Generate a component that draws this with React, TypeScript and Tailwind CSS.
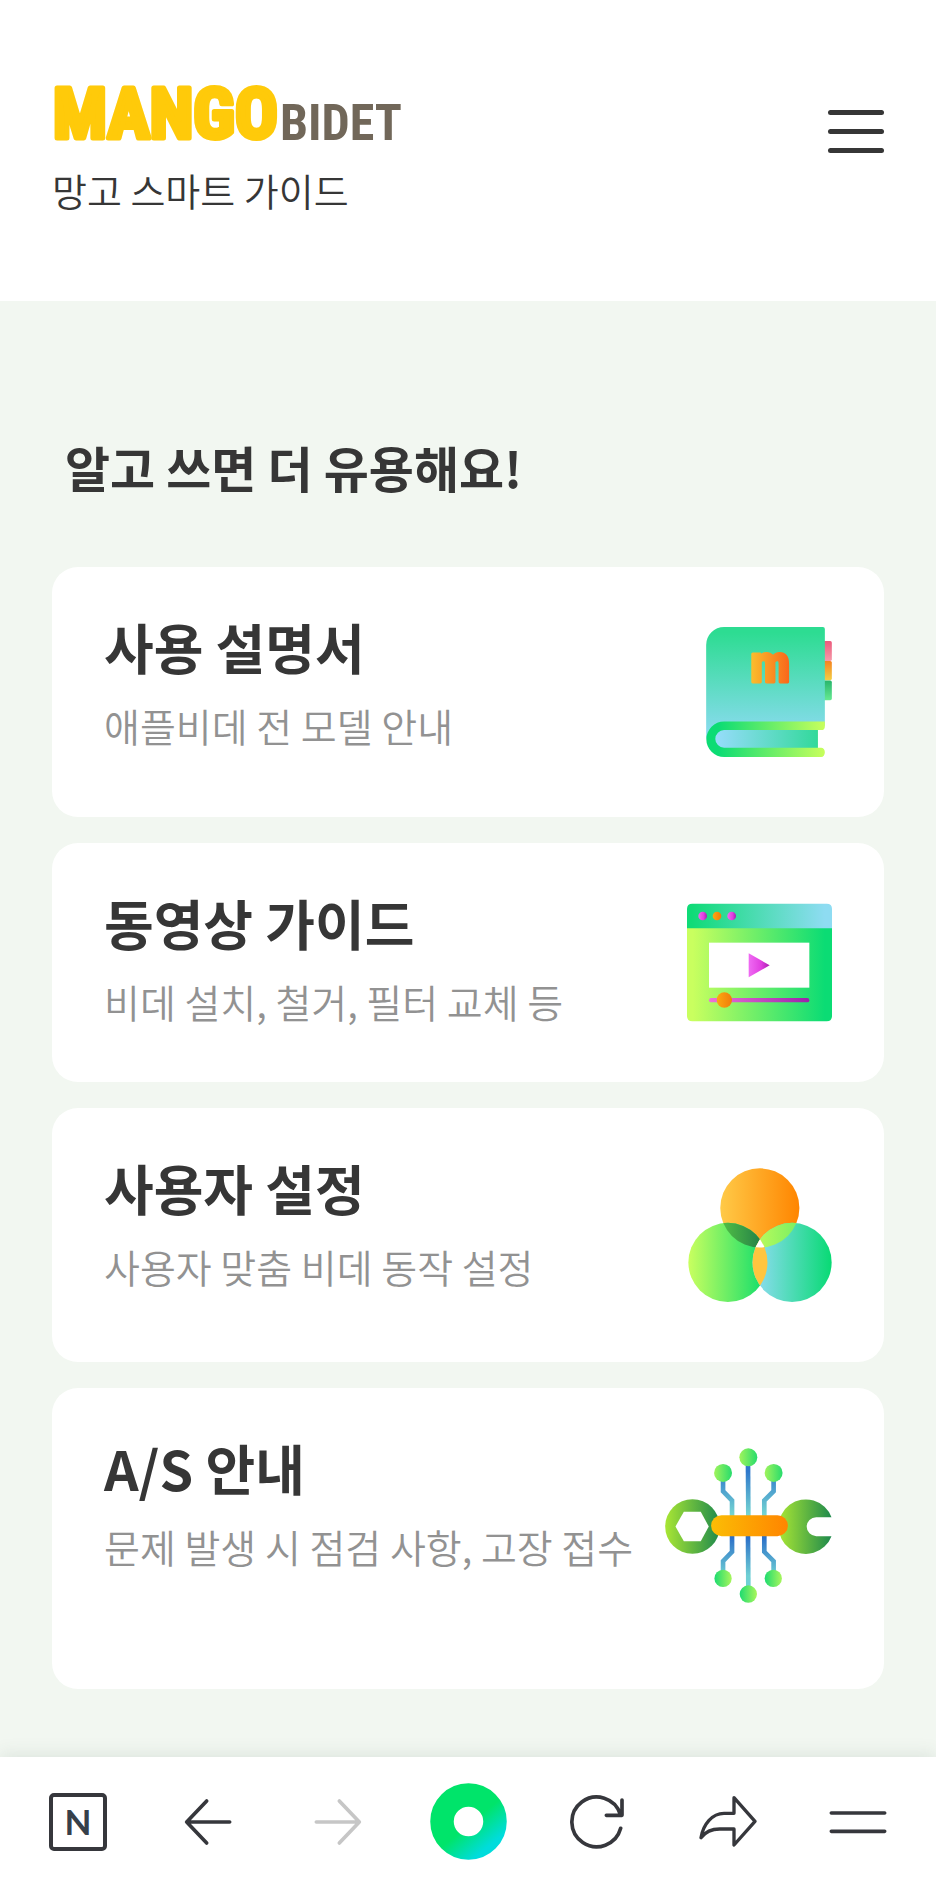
import type { ReactNode } from "react";

function BookIcon() {
  return (
    <svg aria-hidden="true" className="h-[130px] w-[126px] overflow-visible" viewBox="76 81 378 391">
      <defs>
        <linearGradient id="bookCover" x1="0" y1="0" x2="0" y2="1">
          <stop offset="0.05" stopColor="#2ddc92" />
          <stop offset="1" stopColor="#8edbf3" />
        </linearGradient>
        <linearGradient id="bookSpine" x1="0" y1="0" x2="1" y2="0">
          <stop offset="0.1" stopColor="#0cdc74" />
          <stop offset="1" stopColor="#c8ff5c" />
        </linearGradient>
        <linearGradient id="bookPages" x1="0" y1="0" x2="1" y2="0">
          <stop offset="0" stopColor="#97dcfb" />
          <stop offset="1" stopColor="#32d99b" />
        </linearGradient>
        <linearGradient id="bookLetter" x1="0" y1="0" x2="1" y2="0">
          <stop offset="0" stopColor="#fbc02d" />
          <stop offset="1" stopColor="#f9641a" />
        </linearGradient>
        <linearGradient id="tabPink" x1="0" y1="0" x2="0" y2="1">
          <stop offset="0" stopColor="#ec5a7c" />
          <stop offset="1" stopColor="#f59aa9" />
        </linearGradient>
        <linearGradient id="tabOrange" x1="0" y1="0" x2="0" y2="1">
          <stop offset="0" stopColor="#f58220" />
          <stop offset="1" stopColor="#f3cf45" />
        </linearGradient>
        <linearGradient id="tabGreen" x1="0" y1="0" x2="0" y2="1">
          <stop offset="0" stopColor="#28b56c" />
          <stop offset="1" stopColor="#66ea92" />
        </linearGradient>
      </defs>
      <rect x="420" y="123" width="34" height="60" rx="5" fill="url(#tabPink)" />
      <rect x="420" y="183" width="34" height="58" rx="5" fill="url(#tabOrange)" />
      <rect x="420" y="242" width="34" height="59" rx="5" fill="url(#tabGreen)" />
      <path d="M130 81H427Q433 81 433 87V378H110L76 418V135A54 54 0 0 1 130 81Z" fill="url(#bookCover)" />
      <path d="M130 365H433V380Q433 391 422 391H412V444H422A11 14 0 0 1 422 472H130A53 53 0 0 1 130 365Z" fill="url(#bookSpine)" />
      <path d="M130 391H412V444H130A26 26 0 0 1 130 391Z" fill="url(#bookPages)" />
      <text
        x="269"
        y="246"
        textAnchor="middle"
        fontFamily="Roboto Condensed, Roboto, sans-serif"
        fontWeight="700"
        fontSize="164"
        fill="url(#bookLetter)"
        stroke="url(#bookLetter)"
        strokeWidth="9"
        strokeLinejoin="round"
      >
        m
      </text>
    </svg>
  );
}

function VideoIcon() {
  return (
    <svg aria-hidden="true" className="h-[119px] w-[145px]" viewBox="51 70 435 353">
      <defs>
        <linearGradient id="videoBody" x1="0" y1="0" x2="1" y2="0">
          <stop offset="0.04" stopColor="#c9ff5f" />
          <stop offset="0.95" stopColor="#0bdc74" />
        </linearGradient>
        <linearGradient id="videoBar" x1="0" y1="0" x2="1" y2="0">
          <stop offset="0.03" stopColor="#0fdb77" />
          <stop offset="0.95" stopColor="#8edcf2" />
        </linearGradient>
        <linearGradient id="videoPink" x1="0" y1="0" x2="1" y2="0">
          <stop offset="0" stopColor="#ef6bf3" />
          <stop offset="0.6" stopColor="#e03fe0" />
          <stop offset="1" stopColor="#a81fae" />
        </linearGradient>
        <linearGradient id="videoTrack" gradientUnits="userSpaceOnUse" x1="117" y1="0" x2="418" y2="0">
          <stop offset="0" stopColor="#ee72d8" />
          <stop offset="1" stopColor="#9a24aa" />
        </linearGradient>
        <linearGradient id="videoOrange" x1="0" y1="0" x2="1" y2="0">
          <stop offset="0" stopColor="#fca810" />
          <stop offset="1" stopColor="#f07c0a" />
        </linearGradient>
      </defs>
      <path d="M51 143H486V407Q486 423 470 423H67Q51 423 51 407Z" fill="url(#videoBody)" />
      <path d="M51 144V86Q51 70 67 70H470Q486 70 486 86V144Z" fill="url(#videoBar)" />
      <circle cx="98" cy="107" r="13" fill="url(#videoPink)" />
      <circle cx="141" cy="107" r="13" fill="url(#videoOrange)" />
      <circle cx="185" cy="107" r="13" fill="url(#videoPink)" />
      <rect x="117" y="187" width="301" height="135" fill="#fff" />
      <path d="M236 219L299 255L236 291Z" fill="url(#videoPink)" />
      <rect x="117" y="353" width="301" height="13" rx="6.5" fill="url(#videoTrack)" />
      <circle cx="163" cy="359" r="23" fill="url(#videoOrange)" />
    </svg>
  );
}

function CirclesIcon() {
  return (
    <svg aria-hidden="true" className="h-[134px] w-[144px]" viewBox="53 53 431 403">
      <defs>
        <linearGradient id="circleTop" x1="0" y1="0" x2="1" y2="0">
          <stop offset="0" stopColor="#ffca48" />
          <stop offset="1" stopColor="#ff8500" />
        </linearGradient>
        <linearGradient id="circleLeft" x1="0" y1="0" x2="1" y2="0">
          <stop offset="0" stopColor="#c9ff5f" />
          <stop offset="1" stopColor="#0bdc6c" />
        </linearGradient>
        <linearGradient id="circleRight" x1="0" y1="0" x2="1" y2="0">
          <stop offset="0" stopColor="#93dcf6" />
          <stop offset="1" stopColor="#08da74" />
        </linearGradient>
        <linearGradient id="overlapDark" gradientUnits="userSpaceOnUse" x1="160" y1="0" x2="268" y2="0">
          <stop offset="0" stopColor="#4fbc45" />
          <stop offset="1" stopColor="#268348" />
        </linearGradient>
        <linearGradient id="overlapLime" gradientUnits="userSpaceOnUse" x1="268" y1="0" x2="376" y2="0">
          <stop offset="0" stopColor="#b5fa5c" />
          <stop offset="1" stopColor="#7ef062" />
        </linearGradient>
        <clipPath id="clipTop">
          <circle cx="268" cy="173" r="119" />
        </clipPath>
        <clipPath id="clipLeft">
          <circle cx="172" cy="337" r="119" />
        </clipPath>
      </defs>
      <circle cx="268" cy="173" r="119" fill="url(#circleTop)" />
      <circle cx="172" cy="337" r="119" fill="url(#circleLeft)" />
      <circle cx="365" cy="337" r="119" fill="url(#circleRight)" />
      <g clipPath="url(#clipTop)">
        <circle cx="172" cy="337" r="119" fill="url(#overlapDark)" />
        <circle cx="365" cy="337" r="119" fill="url(#overlapLime)" />
      </g>
      <g clipPath="url(#clipLeft)">
        <circle cx="365" cy="337" r="119" fill="#ffc53f" />
        <g clipPath="url(#clipTop)">
          <circle cx="365" cy="337" r="119" fill="#fff" />
        </g>
      </g>
    </svg>
  );
}

function ServiceIcon() {
  return (
    <svg aria-hidden="true" className="h-[155px] w-[167px]" viewBox="41 50 501 466">
      <defs>
        <linearGradient id="wrenchGreen" x1="0" y1="0" x2="1" y2="0">
          <stop offset="0" stopColor="#a9e634" />
          <stop offset="1" stopColor="#1f8a4c" />
        </linearGradient>
        <linearGradient id="wrenchBar" x1="0" y1="0" x2="1" y2="0">
          <stop offset="0" stopColor="#fbbd05" />
          <stop offset="1" stopColor="#ff8500" />
        </linearGradient>
        <linearGradient id="wireTop" gradientUnits="userSpaceOnUse" x1="0" y1="105" x2="0" y2="254">
          <stop offset="0.1" stopColor="#2f78cc" />
          <stop offset="1" stopColor="#77d8d2" />
        </linearGradient>
        <linearGradient id="wireBottom" gradientUnits="userSpaceOnUse" x1="0" y1="315" x2="0" y2="464">
          <stop offset="0" stopColor="#2a6dc8" />
          <stop offset="0.8" stopColor="#6fd0d4" />
        </linearGradient>
        <linearGradient id="nodeTop" x1="0" y1="0" x2="1" y2="0">
          <stop offset="0" stopColor="#a0f45c" />
          <stop offset="1" stopColor="#27dc6c" />
        </linearGradient>
        <linearGradient id="nodeBottom" x1="0" y1="0" x2="1" y2="0">
          <stop offset="0" stopColor="#1edb70" />
          <stop offset="1" stopColor="#a9f65c" />
        </linearGradient>
      </defs>
      <g fill="none" strokeWidth="14" stroke="url(#wireTop)">
        <path d="M215 140V180L242 208V256M367 140V180L339 208V256" />
        <path d="M290 100L291 256" />
      </g>
      <g fill="none" strokeWidth="14" stroke="url(#wireBottom)">
        <path d="M242 312V362L215 390V425M339 312V362L367 390V425" />
        <path d="M290 312L291 470" />
      </g>
      <g fill="url(#nodeTop)">
        <circle cx="215" cy="125" r="27" />
        <circle cx="291" cy="78" r="27" />
        <circle cx="367" cy="125" r="27" />
      </g>
      <g fill="url(#nodeBottom)">
        <circle cx="215" cy="442" r="26" />
        <circle cx="291" cy="489" r="26" />
        <circle cx="366" cy="442" r="26" />
      </g>
      <circle cx="123" cy="286" r="82" fill="url(#wrenchGreen)" />
      <path d="M97 242H148L172 286L148 330H97L72 286Z" fill="#fff" />
      <path d="M541 258H495A28.500 28.500 0 0 0 495 315H541A82 82 0 1 1 541 258Z" fill="url(#wrenchGreen)" />
      <rect x="179" y="252" width="231" height="63" rx="31.500" fill="url(#wrenchBar)" />
    </svg>
  );
}

type Guide = { title: string; text: string; icon: ReactNode; extra?: boolean };

const guides: Guide[] = [
  { title: "사용 설명서", text: "애플비데 전 모델 안내", icon: <BookIcon /> },
  { title: "동영상 가이드", text: "비데 설치, 철거, 필터 교체 등", icon: <VideoIcon /> },
  { title: "사용자 설정", text: "사용자 맞춤 비데 동작 설정", icon: <CirclesIcon /> },
  { title: "A/S 안내", text: "문제 발생 시 점검 사항, 고장 접수", icon: <ServiceIcon />, extra: true },
];

function GuideCard({ guide }: { guide: Guide }) {
  return (
    <a
      href="#"
      className={
        guide.extra
          ? "flex items-start justify-between rounded-[26px] bg-white px-[52px] pt-[60px] pb-[86px]"
          : "flex items-start justify-between rounded-[26px] bg-white px-[52px] py-[60px]"
      }
    >
      <div className="-mt-3 -mb-2 whitespace-nowrap">
        <h2 className="text-[54px] leading-[64px] font-bold text-[#363636]">{guide.title}</h2>
        <p className="mt-[22px] text-[39px] leading-[48px] font-[350] text-[#929292]">{guide.text}</p>
      </div>
      <div className="shrink-0">{guide.icon}</div>
    </a>
  );
}

function NavButton({ label, disabled, children }: { label: string; disabled?: boolean; children: ReactNode }) {
  return (
    <button type="button" aria-label={label} disabled={disabled} className="flex flex-1 items-center justify-center">
      {children}
    </button>
  );
}

const line = {
  fill: "none",
  stroke: "#36373c",
  strokeWidth: 11,
  strokeLinecap: "round",
  strokeLinejoin: "round",
} as const;

function BottomNav() {
  return (
    <nav
      aria-label="브라우저 도구"
      className="sticky bottom-0 flex h-[129px] items-stretch bg-white px-[13px] shadow-[0_-4px_16px_rgba(60,90,80,0.10)]"
    >
      <NavButton label="네이버 홈">
        <span className="flex size-[58px] items-center justify-center rounded-[5px] border-4 border-[#36373c] font-['Lato',sans-serif] text-[35px] leading-none font-bold text-[#36404a]">
          N
        </span>
      </NavButton>
      <NavButton label="뒤로">
        <svg className="h-12 w-12" viewBox="557 171 144 144" {...line}>
          <path d="M694 243H565M625 180L565 243L625 306" />
        </svg>
      </NavButton>
      <NavButton label="앞으로" disabled>
        <svg className="h-12 w-12" viewBox="945 171 144 144" {...line} stroke="#c6c6c6">
          <path d="M952 243H1081M1021 180L1081 243L1021 306" />
        </svg>
      </NavButton>
      <NavButton label="그린닷">
        <svg className="size-[77px]" viewBox="0 0 77 77">
          <defs>
            <linearGradient id="greenDot" x1="0.2" y1="0.1" x2="0.9" y2="0.95">
              <stop offset="0.5" stopColor="#00e46a" />
              <stop offset="1" stopColor="#00dcdc" />
            </linearGradient>
          </defs>
          <circle cx="38.5" cy="38.5" r="26.5" fill="none" stroke="url(#greenDot)" strokeWidth="23.500" />
        </svg>
      </NavButton>
      <NavButton label="새로고침">
        <svg className="size-[56px]" viewBox="306 159 168 168" {...line}>
          <path d="M458 262A74.500 74.500 0 1 1 457 220M462 177V223H415" />
        </svg>
      </NavButton>
      <NavButton label="공유">
        <svg className="size-[58px]" viewBox="693 156 174 174" {...line} strokeWidth={10}>
          <path d="M798 170L861 241L798 312V264H755C727 264 711 274 699 290C706 249 733 217 768 217H798Z" />
        </svg>
      </NavButton>
      <NavButton label="메뉴">
        <svg className="size-[58px]" viewBox="1083 157 174 174" {...line}>
          <path d="M1090 217H1250M1090 272H1250" />
        </svg>
      </NavButton>
    </nav>
  );
}

export default function App() {
  return (
    <div className="flex min-h-screen flex-col bg-[#f2f7f1] font-['Noto_Sans_CJK_KR','Noto_Sans',sans-serif] text-[#363636]">
      <header className="flex items-start justify-between bg-white px-[52px] pt-[80px] pb-[84px]">
        <div>
          <a href="#" aria-label="MANGOBIDET" className="block">
            <svg
              className="h-[64px] w-[350px] overflow-visible"
              viewBox="0 0 350 64"
              fontFamily="Roboto Condensed, Roboto, sans-serif"
              fontWeight="700"
            >
              <text x="1" y="58" fontSize="71" fill="#ffca0a" stroke="#ffca0a" strokeWidth="5" strokeLinejoin="round">
                MANGO
              </text>
              <text x="228" y="60" fontSize="50" fill="#716759">
                BIDET
              </text>
            </svg>
          </a>
          <p className="mt-[18px] text-[38px] leading-[55px] font-[350]">망고 스마트 가이드</p>
        </div>
        <button type="button" aria-label="전체 메뉴" className="mt-[25px] flex h-[52px] w-[56px] flex-col items-stretch justify-center gap-[14px]">
          <span className="h-[5px] rounded-full bg-[#363636]" />
          <span className="h-[5px] rounded-full bg-[#363636]" />
          <span className="h-[5px] rounded-full bg-[#363636]" />
        </button>
      </header>
      <main className="flex-1 px-[52px] pt-[134px] pb-[60px]">
        <h1 className="px-[13px] text-[49px] leading-[64px] font-bold">알고 쓰면 더 유용해요!</h1>
        <div className="mt-[68px] flex flex-col gap-[26px]">
          {guides.map((guide) => (
            <GuideCard key={guide.title} guide={guide} />
          ))}
        </div>
      </main>
      <BottomNav />
    </div>
  );
}
